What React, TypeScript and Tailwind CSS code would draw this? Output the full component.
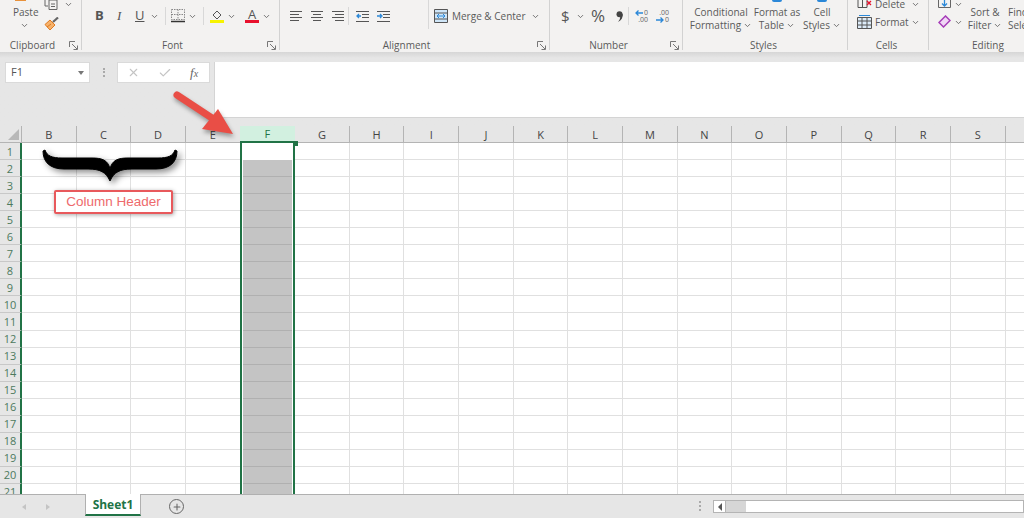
import React, { FC, ReactNode } from "react";
import { ChevronDown, Plus, X, Check } from "lucide-react";

const COLUMNS = ["B", "C", "D", "E", "F", "G", "H", "I", "J", "K", "L", "M", "N", "O", "P", "Q", "R", "S", ""];
const ROWS = Array.from({ length: 21 }, (_, i) => i + 1);

const Chev: FC<{ className?: string }> = ({ className = "" }) => (
    <ChevronDown size={9} strokeWidth={2.4} className={`text-[#666] shrink-0 ${className}`} />
);

const Launcher = () => (
    <svg width="9" height="9" viewBox="0 0 9 9" fill="none" stroke="#777" strokeWidth="1" className="shrink-0">
        <path d="M.5 6V.5H6M3 3l5 5M8.5 4.500v4h-4" />
    </svg>
);

const Sep: FC<{ className?: string }> = ({ className = "" }) => <div className={`w-px h-[18px] bg-[#d8d8d8] shrink-0 ${className}`} />;

const Lines: FC<{ rows: number[][] }> = ({ rows }) => (
    <svg width="14" height="13" viewBox="0 0 14 13" stroke="#555" strokeWidth="1" className="shrink-0">
        {rows.map(([a, b], i) => (
            <path key={i} d={`M${a} ${1.5 + i * 3}H${b}`} />
        ))}
    </svg>
);

const Indent: FC<{ flip?: boolean }> = ({ flip }) => (
    <svg width="13" height="13" viewBox="0 0 13 13" fill="none" className="shrink-0">
        <path d="M0 1.500h13M6 4.500h7M6 7.500h7M0 11.500h13" stroke="#555" />
        <path d={flip ? "M0 6h4M3 4l2 2-2 2" : "M1 6h4M3 4 1 6l2 2"} stroke="#2b88d8" strokeWidth="1.300" />
    </svg>
);

const Group: FC<{ w: string; label: string; launcher?: boolean; children?: ReactNode; labelClass?: string }> = ({
    w,
    label,
    launcher,
    children,
    labelClass = "",
}) => (
    <div className={`${w} h-[50px] shrink-0 border-r border-[#d2d2d2] flex flex-col`}>
        <div className="h-[40px] flex overflow-hidden">{children}</div>
        <div className="h-[10px] flex items-center pr-[3px]">
            <div className={`flex-1 text-center text-[10px] leading-none text-[#5a5a5a] whitespace-nowrap ${labelClass}`}>{label}</div>
            {launcher && <Launcher />}
        </div>
    </div>
);

const StyleBtn: FC<{ top: string; bottom: string; w: string; dot?: boolean }> = ({ top, bottom, w, dot }) => (
    <div className={`${w} shrink-0 flex flex-col items-center text-[10px] leading-[13px] text-[#5a5a5a] whitespace-nowrap ${dot ? "" : "pt-[6px]"}`}>
        {dot && <div className="w-[10px] h-[2px] mb-[4px] rounded-b-full bg-[#2b88d8]" />}
        <span>{top}</span>
        <span className="flex items-center gap-[2px]">
            {bottom}
            <Chev />
        </span>
    </div>
);

const Ribbon = () => (
    <div className="h-[52px] shrink-0 bg-[#f3f2f1] flex overflow-hidden">
        <Group w="w-[82px]" label="Clipboard" launcher labelClass="pr-[4px]">
            <div className="w-[44px] pl-[13px] flex flex-col text-[10px] leading-[12px] text-[#5a5a5a]">
                <div className="w-[11px] h-[1px] ml-[2px] mb-[5px] bg-[#e8913a]" />
                <span>Paste</span>
                <Chev className="ml-[7px] mt-[3px]" />
            </div>
            <div className="flex flex-col">
                <div className="flex items-start gap-[5px]">
                    <svg width="15" height="10" viewBox="0 0 15 10" fill="none" stroke="#666" className="shrink-0">
                        <path d="M1 0v6h3M5 0h8v9.500H5zM7 4h4M7 6.500h4" />
                    </svg>
                    <Chev />
                </div>
                <svg width="16" height="14" viewBox="0 0 16 14" fill="none" className="mt-[7px]">
                    <path d="M1 7.500 6 3l5 5-5 5z" fill="#f6b26b" stroke="#e07a1f" />
                    <path d="M3 10l4-3" stroke="#e07a1f" />
                    <path d="M9 5l5-4.500" stroke="#666" strokeWidth="2.200" />
                </svg>
            </div>
        </Group>

        <Group w="w-[198px]" label="Font" launcher labelClass="pr-[4px]">
            <div className="flex items-center h-[32px] pl-[13px] text-[#555] text-[13px]">
                <span className="w-[20px] font-bold">B</span>
                <span className="w-[20px] pl-[2px] italic font-['Liberation_Serif',serif]">I</span>
                <span className="w-[13px] underline">U</span>
                <Chev className="ml-[2px]" />
                <Sep className="ml-[6px]" />
                <svg width="14" height="14" viewBox="0 0 14 14" fill="none" className="ml-[5px] shrink-0">
                    <path d="M.5.500h13v10H.5zM7 .5v10M.5 5.500h13" stroke="#888" strokeDasharray="1.500 1" />
                    <path d="M0 12.500h14" stroke="#333" strokeWidth="1.500" />
                </svg>
                <Chev className="ml-[3px]" />
                <Sep className="ml-[6px]" />
                <div className="ml-[6px] w-[14px] flex flex-col items-center shrink-0">
                    <svg width="11" height="10" viewBox="0 0 11 10" fill="none" stroke="#555">
                        <path d="M1 5l4-4 4 4-4 4z" />
                    </svg>
                    <div className="w-[14px] h-[3px] bg-[#f7f300]" />
                </div>
                <Chev className="ml-[3px]" />
                <div className="ml-[9px] w-[14px] flex flex-col items-center shrink-0 leading-[10px] text-[13px]">
                    <span>A</span>
                    <div className="w-[14px] h-[3px] mt-[1px] bg-[#e8112d]" />
                </div>
                <Chev className="ml-[3px]" />
            </div>
        </Group>

        <Group w="w-[270px]" label="Alignment" launcher labelClass="pr-[4px]">
            <div className="flex items-center h-[32px] pl-[10px]">
                <Lines rows={[[0, 12], [0, 9], [0, 12], [0, 9]]} />
                <div className="ml-[6px]">
                    <Lines rows={[[1, 13], [3, 11], [1, 13], [3, 11]]} />
                </div>
                <div className="ml-[6px]">
                    <Lines rows={[[2, 14], [5, 14], [2, 14], [5, 14]]} />
                </div>
                <Sep className="ml-[4px]" />
                <div className="ml-[7px]">
                    <Indent />
                </div>
                <div className="ml-[8px]">
                    <Indent flip />
                </div>
                <Sep className="ml-[38px] h-[30px] -mt-[4px]" />
                <svg width="14" height="14" viewBox="0 0 14 14" fill="#cfe6f8" stroke="#555" className="ml-[5px] shrink-0">
                    <path d="M.5.500h13v13H.5zM.5 4h13M.5 10h13" />
                    <path d="M3 7h8M5 5 3 7l2 2M9 5l2 2-2 2" stroke="#2b88d8" fill="none" />
                </svg>
                <span className="ml-[4px] w-[74px] text-[10px] text-[#5a5a5a] whitespace-nowrap">Merge &amp; Center</span>
                <Chev className="ml-[5px]" />
            </div>
        </Group>

        <Group w="w-[133px]" label="Number" launcher labelClass="pr-[3px]">
            <div className="flex items-center h-[32px] pl-[11px] text-[#555]">
                <span className="text-[15px] w-[12px]">$</span>
                <Chev className="ml-[3px]" />
                <span className="ml-[6px] text-[17px] w-[17px]">%</span>
                <svg width="7" height="11" viewBox="0 0 7 11" fill="#444" className="ml-[8px] shrink-0">
                    <circle cx="3.500" cy="3.200" r="3" />
                    <path d="M4 5c2.500-.5 3-3 3-3 0 4.500-1.500 7.500-5 9 1.500-2 2.500-3.500 2-6z" />
                </svg>
                <Sep className="ml-[5px]" />
                <div className="ml-[5px] w-[14px] shrink-0 flex flex-col items-end text-[7px] leading-[7px] text-[#666]">
                    <div className="flex items-center gap-[1px]">
                        <svg width="8" height="6" viewBox="0 0 8 6" fill="none" stroke="#2b88d8" strokeWidth="1.300">
                            <path d="M8 3H1M3.500.5 1 3l2.500 2.500" />
                        </svg>
                        <span>0</span>
                    </div>
                    <span>.00</span>
                </div>
                <div className="ml-[7px] w-[14px] shrink-0 flex flex-col items-end text-[7px] leading-[7px] text-[#666]">
                    <span>.00</span>
                    <div className="flex items-center gap-[1px]">
                        <svg width="8" height="6" viewBox="0 0 8 6" fill="none" stroke="#2b88d8" strokeWidth="1.300">
                            <path d="M0 3h7M4.500.5 7 3 4.500 5.500" />
                        </svg>
                        <span>0</span>
                    </div>
                </div>
            </div>
        </Group>

        <Group w="w-[165px]" label="Styles">
            <StyleBtn top="Conditional" bottom="Formatting" w="w-[72px] ml-[2px]" />
            <StyleBtn top="Format as" bottom="Table" w="w-[40px]" dot />
            <StyleBtn top="Cell" bottom="Styles" w="w-[50px]" dot />
        </Group>

        <Group w="w-[81px]" label="Cells">
            <div className="pl-[9px] flex flex-col text-[10px] text-[#5a5a5a]">
                <div className="flex items-center h-[8px] gap-[3px]">
                    <svg width="15" height="8" viewBox="0 0 15 8" fill="none" stroke="#555" className="shrink-0">
                        <path d="M1 0v7.500h9V0M5.500 0v7.500" />
                        <path d="M10 1l4 4M14 1l-4 4" stroke="#e8112d" strokeWidth="1.300" />
                    </svg>
                    <span className="w-[33px]">Delete</span>
                    <Chev />
                </div>
                <div className="flex items-center h-[14px] mt-[7px] gap-[3px]">
                    <svg width="15" height="14" viewBox="0 0 15 14" fill="#dcebf8" stroke="#555" className="shrink-0">
                        <path d="M.5 2.500h14v11H.5zM.5 6h14M.5 10h14M5 2.500v11M10 2.500v11" />
                        <path d="M2 .5h11" stroke="#2b88d8" />
                    </svg>
                    <span className="w-[33px]">Format</span>
                    <Chev />
                </div>
            </div>
        </Group>

        <div className="w-[96px] h-[50px] shrink-0 flex flex-col">
            <div className="h-[40px] flex overflow-hidden">
                <div className="pl-[9px] w-[38px] shrink-0 flex flex-col">
                    <div className="flex items-center h-[8px] gap-[3px]">
                        <svg width="13" height="8" viewBox="0 0 13 8" fill="none" className="shrink-0">
                            <path d="M.5 0v7.500h12V0" stroke="#666" />
                            <path d="M6.500 0v6M4 3.500 6.500 6 9 3.500" stroke="#2b88d8" strokeWidth="1.300" />
                        </svg>
                        <Chev />
                    </div>
                    <div className="flex items-center h-[14px] mt-[7px] gap-[3px]">
                        <svg width="13" height="14" viewBox="0 0 13 14" fill="#f0d7f5" stroke="#a63cb8" strokeWidth="1.500" className="shrink-0">
                            <path d="M1 7.500 7.500 1l4.500 4.500L5.500 12z" />
                        </svg>
                        <Chev />
                    </div>
                </div>
                <StyleBtn top="Sort &" bottom="Filter" w="w-[36px]" />
                <div className="pl-[5px] flex flex-col text-[10px] leading-[13px] text-[#5a5a5a] pt-[6px] whitespace-nowrap">
                    <span>Find &amp;</span>
                    <span>Select</span>
                </div>
            </div>
            <div className="h-[10px] pl-[22px] text-center text-[10px] leading-none text-[#5a5a5a]">Editing</div>
        </div>
    </div>
);

const FormulaBar = () => (
    <div className="h-[74px] shrink-0 bg-[#e6e6e6] bg-linear-to-b from-[#d6d6d6] to-[#e6e6e6] to-[6px] pt-[10px] flex items-start">
        <div className="ml-[5px] w-[85px] h-[21px] bg-white border border-[#dadada] flex items-center pl-[5px] pr-[5px] text-[11px] text-[#555]">
            <span className="flex-1">F1</span>
            <div className="w-0 h-0 border-x-[3px] border-x-transparent border-t-[4px] border-t-[#777]" />
        </div>
        <div className="ml-[13px] w-[2px] h-[9px] mt-[6px] border-l-2 border-dotted border-[#aaa]" />
        <div className="ml-[12px] w-[93px] h-[21px] bg-white border border-[#dadada] flex items-center pl-[9px] text-[#c4c4c4]">
            <X size={13} strokeWidth={2} />
            <Check size={14} strokeWidth={2} className="ml-[18px]" />
            <span className="ml-[18px] text-[13px] italic text-[#666] font-['Liberation_Serif',serif]">
                f<span className="text-[10px]">x</span>
            </span>
        </div>
        <div className="ml-[4px] flex-1 h-[56px] bg-white border-b border-l border-[#d4d4d4]" />
    </div>
);

const Sheet = () => (
    <div className="relative flex-1 overflow-hidden bg-white">
        <div className="grid grid-cols-[22px_repeat(19,54.650px)] grid-rows-[17px_repeat(21,17.050px)] text-[11px] leading-none">
            <div className="bg-[#e6e6e6] border-r border-b border-[#b4b4b4] flex items-end justify-end p-[2px]">
                <div className="w-0 h-0 border-l-[11px] border-l-transparent border-b-[11px] border-b-[#b8b8b8]" />
            </div>
            {COLUMNS.map((c) => (
                <div
                    key={c || "blank"}
                    className={
                        c === "F"
                            ? "-ml-px bg-[#d2f0e0] text-[#217346] border-b-2 border-[#217346] flex items-center justify-center"
                            : "bg-[#e6e6e6] text-[#444] border-r border-b border-[#b4b4b4] flex items-center justify-center"
                    }
                >
                    {c}
                </div>
            ))}
            {ROWS.map((r) => (
                <React.Fragment key={r}>
                    <div className="bg-[#e6e6e6] text-[#4d7a5e] border-r-2 border-r-[#217346] border-b border-b-[#c8c8c8] flex items-center justify-center">
                        {r}
                    </div>
                    {COLUMNS.map((c) =>
                        c === "F" ? (
                            <div key={c} className="-ml-px border-x-2 border-[#217346] bg-white">
                                {r > 1 && <div className="h-full mx-[1px] bg-[#c4c4c4] border-b border-[#b0b0b0]" />}
                            </div>
                        ) : (
                            <div key={c || "blank"} className="border-r border-b border-[#e0e0e0]" />
                        )
                    )}
                </React.Fragment>
            ))}
        </div>

        <div className="absolute left-[293px] top-[15px] w-[5px] h-[5px] bg-[#217346]" />

        <svg
            width="140"
            height="40"
            viewBox="41 145 140 40"
            fill="#000"
            stroke="#000"
            strokeLinejoin="round"
            className="absolute left-[41px] top-[19px] drop-shadow-[3px_3px_3px_rgba(0,0,0,0.45)]"
        >
            <path d="M45 150C47 156 52 158 62 158L92 158C102 158 108 160 110 169C112 160 118 158 128 158L158 158C168 158 173 156 175 150L177 151C177 162 170 169 156 169L132 169C120 169 114 172 110 181C106 172 100 169 88 169L64 169C50 169 43 162 43 151Z" />
        </svg>

        <div className="absolute left-[54px] top-[64px] w-[119px] h-[24px] bg-white border-2 border-[#e8595c] rounded-[2px] shadow-[1px_1px_4px_rgba(0,0,0,0.35)] flex items-center justify-center text-[13.500px] text-[#ee6a6c] font-['Liberation_Sans',sans-serif]">
            Column Header
        </div>
    </div>
);

const Footer = () => (
    <div className="h-[24px] shrink-0 bg-[#e6e6e6] border-t border-[#b0b0b0] flex items-start relative">
        <div className="ml-[22px] mt-[9px] w-0 h-0 border-y-[3px] border-y-transparent border-r-[4px] border-r-[#c4c4c4]" />
        <div className="ml-[20px] mt-[9px] w-0 h-0 border-y-[3px] border-y-transparent border-l-[4px] border-l-[#c4c4c4]" />
        <div className="ml-[35px] -mt-px w-[56px] h-[22px] pt-[2px] bg-white border-x border-b-2 border-x-[#b0b0b0] border-b-[#217346] flex items-center justify-center text-[12px] font-bold text-[#217346]">
            Sheet1
        </div>
        <div className="ml-[28px] mt-[4px] w-[15px] h-[15px] rounded-full border border-[#666] flex items-center justify-center text-[#666]">
            <Plus size={10} strokeWidth={2.500} />
        </div>
        <div className="ml-[515px] mt-[6px] w-[2px] h-[10px] border-l-2 border-dotted border-[#aaa]" />
        <div className="ml-[12px] mt-[5px] flex-1 h-[13px] bg-white border border-[#b4b4b4] flex items-center">
            <div className="w-[12px] h-full border-r border-[#b4b4b4] flex items-center justify-center">
                <div className="w-0 h-0 border-y-[4px] border-y-transparent border-r-[4px] border-r-[#555]" />
            </div>
            <div className="w-[20px] h-full bg-[#d6d6d6]" />
        </div>
    </div>
);

const App: FC = () => (
    <div className="relative w-[1024px] h-[518px] overflow-hidden flex flex-col bg-white font-['Open_Sans',sans-serif]">
        <Ribbon />
        <FormulaBar />
        <Sheet />
        <Footer />
        <svg width="80" height="60" viewBox="0 0 80 60" className="absolute left-[170px] top-[88px] drop-shadow-[1px_3px_2px_rgba(0,0,0,0.35)]">
            <path d="M7 7 48 34" stroke="#e94e46" strokeWidth="7" strokeLinecap="round" />
            <path d="M63 46 32 41 48 21z" fill="#e94e46" />
        </svg>
    </div>
);

export default App;
